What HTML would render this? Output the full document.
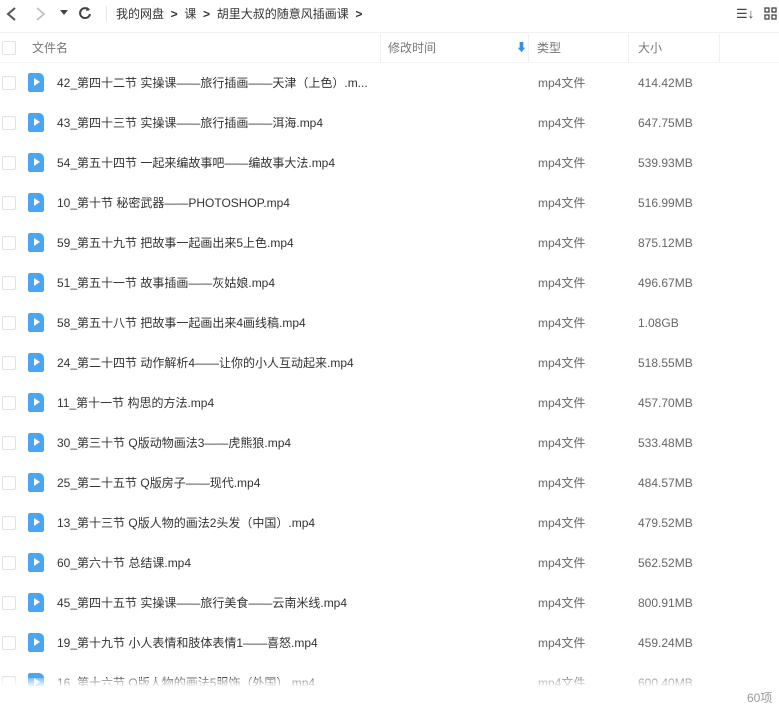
<!DOCTYPE html>
<html><head><meta charset="utf-8"><style>
body{margin:0;width:779px;height:708px;overflow:hidden;background:#fff;font-family:"Liberation Sans","Noto Sans CJK SC",sans-serif;font-size:12px;line-height:16px;color:#424e67;position:relative}
.a{position:absolute;white-space:nowrap;line-height:16px}
.cb{position:absolute;left:2px;width:12px;height:12px;border:1px solid #e0e2e6;border-radius:2px}
.ic{position:absolute;left:28px;width:16px;height:19px;background:#4aa6f5;border-radius:2px 5px 2px 2px}
.ic:after{content:"";position:absolute;left:6px;top:5px;border-left:6px solid #fff;border-top:4.5px solid transparent;border-bottom:4.5px solid transparent}
.sep{position:absolute;top:34px;width:1px;height:28px;background:#eef0f3}
.g{color:#666}
</style></head><body>
<svg class="a" style="left:4px;top:6px" width="14" height="16"><path d="M11 2 L4 8 L11 14" stroke="#555" stroke-width="2" fill="none"/></svg>
<svg class="a" style="left:33px;top:6px" width="14" height="16"><path d="M4 2 L11 8 L4 14" stroke="#bbb" stroke-width="1.5" fill="none"/></svg>
<svg class="a" style="left:60px;top:10px" width="8" height="6"><path d="M0 0 L8 0 L4 5Z" fill="#444"/></svg>
<svg class="a" style="left:78px;top:6px" width="14" height="14"><path d="M11 4 A5 5 0 1 0 12 8" stroke="#444" stroke-width="2" fill="none"/><path d="M9 1 L12 4 L8 5Z" fill="#444"/></svg>
<div class="a" style="left:106px;top:6px;width:1px;height:16px;background:#e5e5e5"></div>
<div class="a" style="left:116px;top:6px;color:#333">我的网盘 &nbsp;<b>&gt;</b>&nbsp; 课 &nbsp;<b>&gt;</b>&nbsp; 胡里大叔的随意风插画课 &nbsp;<b>&gt;</b></div>
<div class="a" style="left:736px;top:6px;color:#444;font-size:13px">☰↓</div>
<svg class="a" style="left:764px;top:7px" width="14" height="14"><g fill="none" stroke="#444" stroke-width="1.3"><rect x="1" y="1" width="4" height="4"/><rect x="8" y="1" width="4" height="4"/><rect x="1" y="8" width="4" height="4"/><rect x="8" y="8" width="4" height="4"/></g></svg>
<div class="a" style="left:0;top:32px;width:779px;height:1px;background:#f0f0f0"></div>
<div class="cb" style="top:41px"></div>
<div class="a g" style="left:32px;top:40px;color:#777">文件名</div>
<div class="sep" style="left:380px"></div><div class="sep" style="left:528px"></div><div class="sep" style="left:628px"></div><div class="sep" style="left:719px"></div>
<div class="a" style="left:388px;top:40px;color:#777">修改时间</div>
<div class="a" style="left:516px;top:40px;color:#3a8ee6;font-size:11px">⬇</div>
<div class="a" style="left:537px;top:40px;color:#777">类型</div>
<div class="a" style="left:638px;top:40px;color:#777">大小</div>
<div class="a" style="left:0;top:62px;width:779px;height:1px;background:#f3f3f3"></div>
<div id="rows"></div>
<script>
var d=[["42_第四十二节 实操课——旅行插画——天津（上色）.m...","414.42MB"],["43_第四十三节 实操课——旅行插画——洱海.mp4","647.75MB"],["54_第五十四节 一起来编故事吧——编故事大法.mp4","539.93MB"],["10_第十节 秘密武器——PHOTOSHOP.mp4","516.99MB"],["59_第五十九节 把故事一起画出来5上色.mp4","875.12MB"],["51_第五十一节 故事插画——灰姑娘.mp4","496.67MB"],["58_第五十八节 把故事一起画出来4画线稿.mp4","1.08GB"],["24_第二十四节 动作解析4——让你的小人互动起来.mp4","518.55MB"],["11_第十一节 构思的方法.mp4","457.70MB"],["30_第三十节 Q版动物画法3——虎熊狼.mp4","533.48MB"],["25_第二十五节 Q版房子——现代.mp4","484.57MB"],["13_第十三节 Q版人物的画法2头发（中国）.mp4","479.52MB"],["60_第六十节 总结课.mp4","562.52MB"],["45_第四十五节 实操课——旅行美食——云南米线.mp4","800.91MB"],["19_第十九节 小人表情和肢体表情1——喜怒.mp4","459.24MB"],["16_第十六节 Q版人物的画法5服饰（外国）.mp4","600.40MB"]];
var h="";d.forEach(function(r,i){var c=83+40*i;h+='<div class="cb" style="top:'+(c-7)+'px"></div><div class="ic" style="top:'+(c-10)+'px"></div><div class="a" style="left:57px;top:'+(c-8)+'px;color:#333">'+r[0]+'</div><div class="a g" style="left:538px;top:'+(c-8)+'px">mp4文件</div><div class="a g" style="left:638px;top:'+(c-8)+'px">'+r[1]+'</div>';});
document.getElementById("rows").innerHTML=h;
</script>
<div class="a" style="left:0;top:678px;width:779px;height:8px;background:linear-gradient(rgba(255,255,255,0.3),rgba(255,255,255,0.9))"></div>
<div class="a" style="left:0;top:686px;width:779px;height:22px;background:#fff"></div>
<div class="a" style="left:747px;top:690px;color:#999">60项</div>
</body></html>
